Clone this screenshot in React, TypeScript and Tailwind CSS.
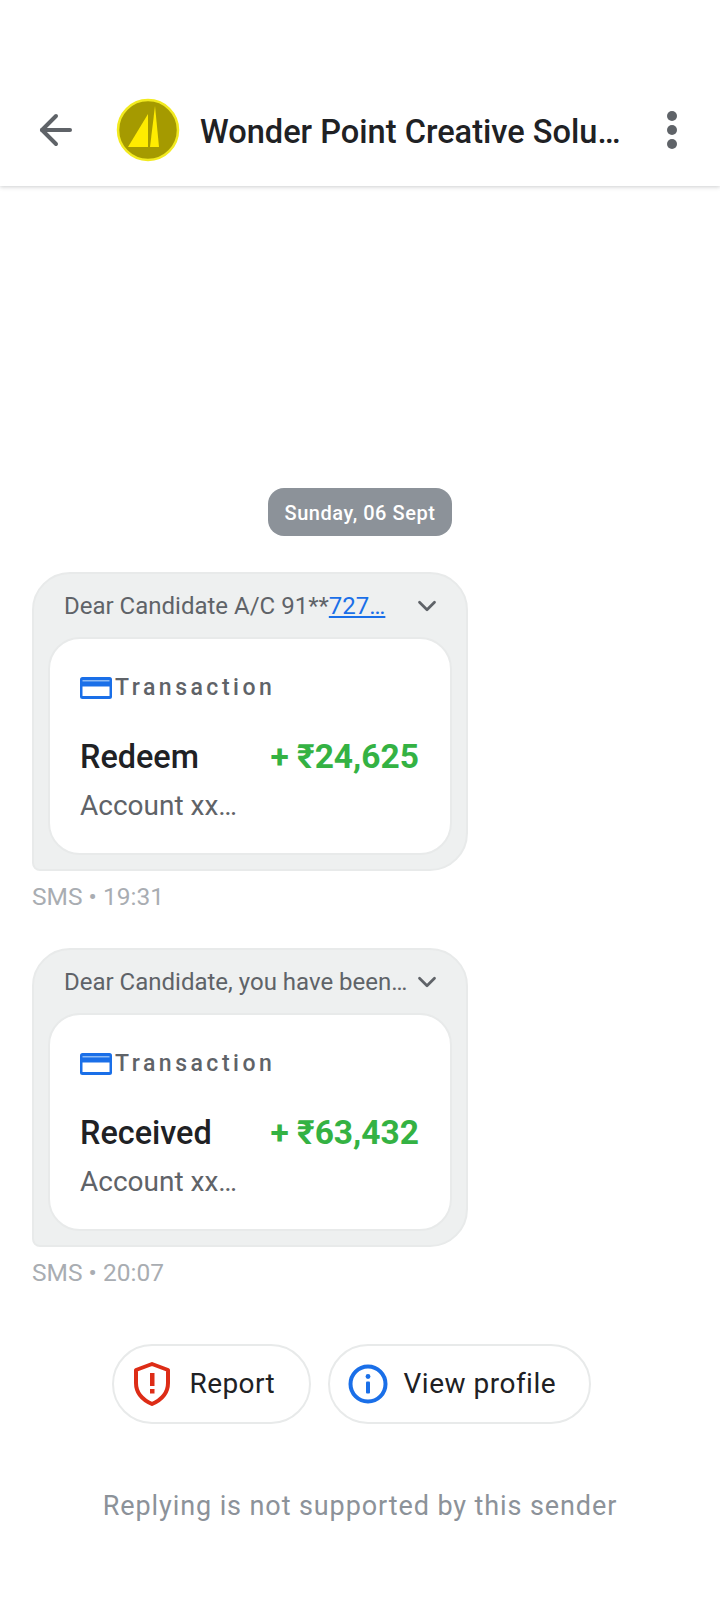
import { ArrowLeft, ChevronDown } from 'lucide-react';

function CardIcon() {
  return (
    <svg width="32" height="22" viewBox="0 0 32 22" className="shrink-0">
      <rect x="0" y="0" width="32" height="22" rx="2.5" fill="#1a6fe8" />
      <rect x="2.5" y="3.2" width="27" height="1.2" fill="#a9ccf8" />
      <rect x="2.5" y="9.5" width="27" height="9.5" fill="#fff" />
    </svg>
  );
}

function ShieldIcon() {
  return (
    <svg width="36" height="44" viewBox="0 0 36 44" className="shrink-0">
      <path d="M18 2 L34 8 V21 C34 31 27 38 18 42 C9 38 2 31 2 21 V8 Z" fill="none" stroke="#dd2c16" strokeWidth="4" strokeLinejoin="round" />
      <rect x="16" y="11" width="4.5" height="13" fill="#dd2c16" />
      <rect x="16" y="27" width="4.5" height="4.5" fill="#dd2c16" />
    </svg>
  );
}

function InfoIcon() {
  return (
    <svg width="40" height="40" viewBox="0 0 40 40" className="shrink-0">
      <circle cx="20" cy="20" r="17.5" fill="none" stroke="#1a6fe8" strokeWidth="4" />
      <rect x="18" y="17.5" width="4" height="12" rx="1" fill="#1a6fe8" />
      <circle cx="20" cy="12.5" r="2.4" fill="#1a6fe8" />
    </svg>
  );
}

function Logo() {
  return (
    <svg width="64" height="64" viewBox="0 0 64 64" className="shrink-0">
      <circle cx="32" cy="32" r="30" fill="#a59a00" stroke="#f2ea20" strokeWidth="2.5" />
      <path d="M12 49 L32 16 L32 49 Z" fill="#ffec00" />
      <path d="M39 8 L43 49 L34 49 Z" fill="#ffec00" />
    </svg>
  );
}

function Message({ title, link, label, amount, time }: { title: string; link?: string; label: string; amount: string; time: string }) {
  return (
    <div>
      <div className="w-[436px] rounded-[38px] rounded-bl-[8px] border-2 border-[#e8eaea] bg-[#eef0f0] px-[14px] pb-[14px]">
        <div className="flex h-[63px] items-center pl-[16px] pr-[10px]">
          <div className="whitespace-nowrap text-[24px] text-[#5f6368]">
            {title}
            {link && <span className="text-[#1a6fe8] underline">{link}</span>}
          </div>
          <ChevronDown size={30} strokeWidth={2.2} className="ml-auto shrink-0 text-[#5f6368]" />
        </div>
        <div className="h-[218px] rounded-[32px] border-2 border-[#e8eaea] bg-white px-[30px] pt-[34px]">
          <div className="flex h-[30px] items-center gap-[3px]">
            <CardIcon />
            <span className="text-[23px] font-medium tracking-[3.5px] text-[#5f6368]">Transaction</span>
          </div>
          <div className="mt-[31px] flex h-[46px] items-center justify-between">
            <span className="text-[32.4px] font-medium text-[#202124]">{label}</span>
            <span className="mr-[1px] text-[33.5px] font-bold text-[#34b243]">{amount}</span>
          </div>
          <div className="mt-[6px] text-[28px] leading-[40px] text-[#5f6368]">Account xx…</div>
        </div>
      </div>
      <div className="mt-[10px] text-[24.5px] leading-[32px] text-[#a9adb2]">SMS • {time}</div>
    </div>
  );
}

export default function App() {
  return (
    <div className="h-[1600px] w-[720px] overflow-hidden bg-white font-['Roboto',sans-serif]">
      <header className="flex h-[186px] items-center pl-[32px] pr-[43px] pt-[74px] shadow-[0_1px_4px_rgba(60,64,67,0.25)]">
        <ArrowLeft size={48} strokeWidth={2} className="shrink-0 text-[#5f6368]" />
        <div className="ml-[36px]"><Logo /></div>
        <div className="ml-[20px] whitespace-nowrap pt-[5px] text-[32.6px] font-medium text-[#202124]">Wonder Point Creative Solu…</div>
        <div className="ml-auto flex flex-col gap-[4px]">
          <span className="h-[10px] w-[10px] rounded-full bg-[#5f6368]" />
          <span className="h-[10px] w-[10px] rounded-full bg-[#5f6368]" />
          <span className="h-[10px] w-[10px] rounded-full bg-[#5f6368]" />
        </div>
      </header>

      <main className="flex flex-col px-[32px] pt-[302px]">
        <div className="self-center rounded-[16px] bg-[#8c9299] px-[17px] pb-[8px] pt-[11px] text-[20px] font-medium leading-[29px] tracking-[0.55px] text-white">Sunday, 06 Sept</div>
        <div className="mt-[36px] flex flex-col gap-[35px]">
          <Message title="Dear Candidate A/C 91**" link="727…" label="Redeem" amount="+ ₹24,625" time="19:31" />
          <Message title="Dear Candidate, you have been…" label="Received" amount="+ ₹63,432" time="20:07" />
        </div>
        <div className="mt-[55px] flex justify-center gap-[17px] pr-[18px]">
          <button className="flex h-[80px] w-[199px] items-center rounded-full border-2 border-[#e8eaea] pl-[20px] text-[28px] tracking-[0.4px] text-[#202124]">
            <ShieldIcon />
            <span className="ml-[20px]">Report</span>
          </button>
          <button className="flex h-[80px] w-[263px] items-center rounded-full border-2 border-[#e8eaea] pl-[18px] text-[28px] tracking-[0.5px] text-[#202124]">
            <InfoIcon />
            <span className="ml-[16px]">View profile</span>
          </button>
        </div>
        <div className="mt-[62px] text-center text-[27px] leading-[40px] tracking-[0.9px] text-[#8c9299]">Replying is not supported by this sender</div>
      </main>
    </div>
  );
}
